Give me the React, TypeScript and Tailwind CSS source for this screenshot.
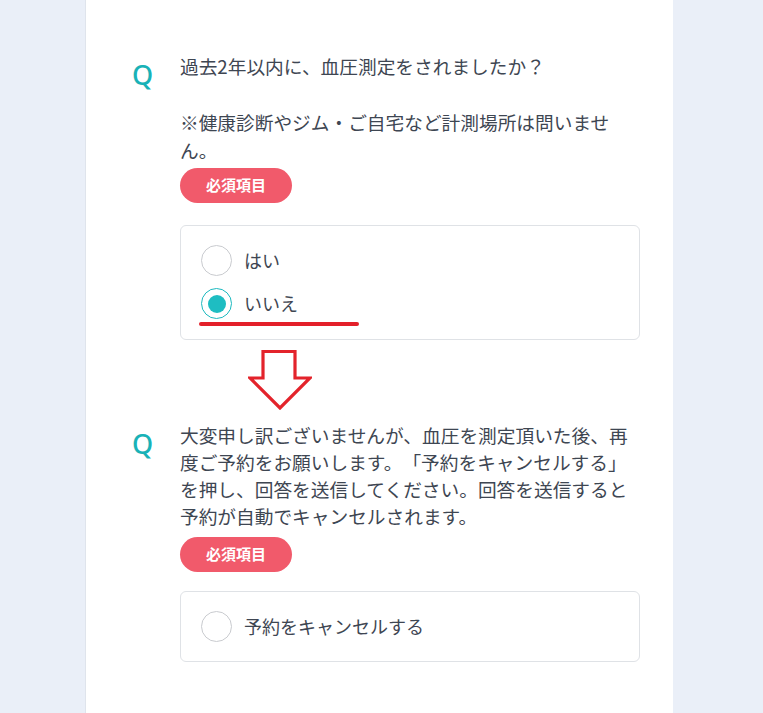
import React from "react";

const font = { fontFamily: '"Noto Sans CJK JP", "Noto Sans", sans-serif' };

function Radio({ checked }: { checked?: boolean }) {
  if (checked) {
    return (
      <span className="flex h-[31px] w-[31px] shrink-0 items-center justify-center rounded-full border-[1.5px] border-[#1cb9bf] bg-white">
        <span className="h-[18px] w-[18px] rounded-full bg-[#1ebdc2]" />
      </span>
    );
  }
  return <span className="h-[31px] w-[31px] shrink-0 rounded-full border-[1.5px] border-[#c9cbcf] bg-white" />;
}

function Badge({ className = "" }: { className?: string }) {
  return (
    <div
      className={`flex h-[35px] w-[112px] items-center justify-center rounded-full bg-[#f15a6b] text-[15px] font-bold text-white ${className}`}
    >
      必須項目
    </div>
  );
}

function QMark() {
  return (
    <div
      className="w-[48px] shrink-0 pt-[3px] text-[27px] font-medium leading-[40px] text-[#19b2b7]"
      style={{ fontFamily: '"Noto Sans", Lato, sans-serif' }}
    >
      Q
    </div>
  );
}

function DownArrow() {
  return (
    <svg width="64" height="60" viewBox="0 0 64 60" className="block">
      <polygon
        points="15,1.5 47,1.5 47,28 62,28 32,58 2,28 15,28"
        fill="white"
        stroke="#e3232b"
        strokeWidth="3.2"
        strokeLinejoin="miter"
      />
    </svg>
  );
}

export default function App() {
  return (
    <div className="min-h-screen bg-[#eaeff8]" style={font}>
      <div className="ml-[85px] min-h-screen w-[588px] border-l border-[#dfe4ec] bg-white pl-[46px] pt-[52px] pb-10 text-[#3e4652] [text-spacing-trim:space-all]">
        {/* 質問1 */}
        <div className="flex">
          <QMark />
          <div className="w-[460px]">
            <p className="text-[18.7px] leading-[28px]">
              過去2年以内に、血圧測定をされましたか？
              <br />
              <br />
              ※健康診断やジム・ご自宅など計測場所は問いません。
            </p>
            <Badge className="mt-[4px]" />
            <div className="relative mt-[22px] flex flex-col gap-3 rounded-md border border-[#dfe2e6] px-5 pt-[19px] pb-5">
              <label className="flex items-center gap-3 text-[18px]">
                <Radio />
                はい
              </label>
              <label className="flex items-center gap-3 text-[18px]">
                <Radio checked />
                いいえ
              </label>
              {/* 赤い下線 */}
              <span className="absolute left-[18px] top-[96px] h-[4px] w-[160px] rounded-full bg-[#e3202a]" />
            </div>
          </div>
        </div>

        {/* 矢印 */}
        <div className="mt-[10px] pl-[116px]">
          <DownArrow />
        </div>

        {/* 質問2 */}
        <div className="mt-[11px] flex">
          <QMark />
          <div className="w-[460px]">
            <p className="text-[18.7px] leading-[27px]">
              大変申し訳ございませんが、血圧を測定頂いた後、再度ご予約をお願いします。「予約をキャンセルする」を押し、回答を送信してください。回答を送信すると予約が自動でキャンセルされます。
            </p>
            <Badge className="mt-[8px]" />
            <div className="mt-[19px] flex flex-col rounded-md border border-[#dfe2e6] px-5 py-[19px]">
              <label className="flex items-center gap-3 text-[18px]">
                <Radio />
                予約をキャンセルする
              </label>
            </div>
          </div>
        </div>
      </div>
    </div>
  );
}
